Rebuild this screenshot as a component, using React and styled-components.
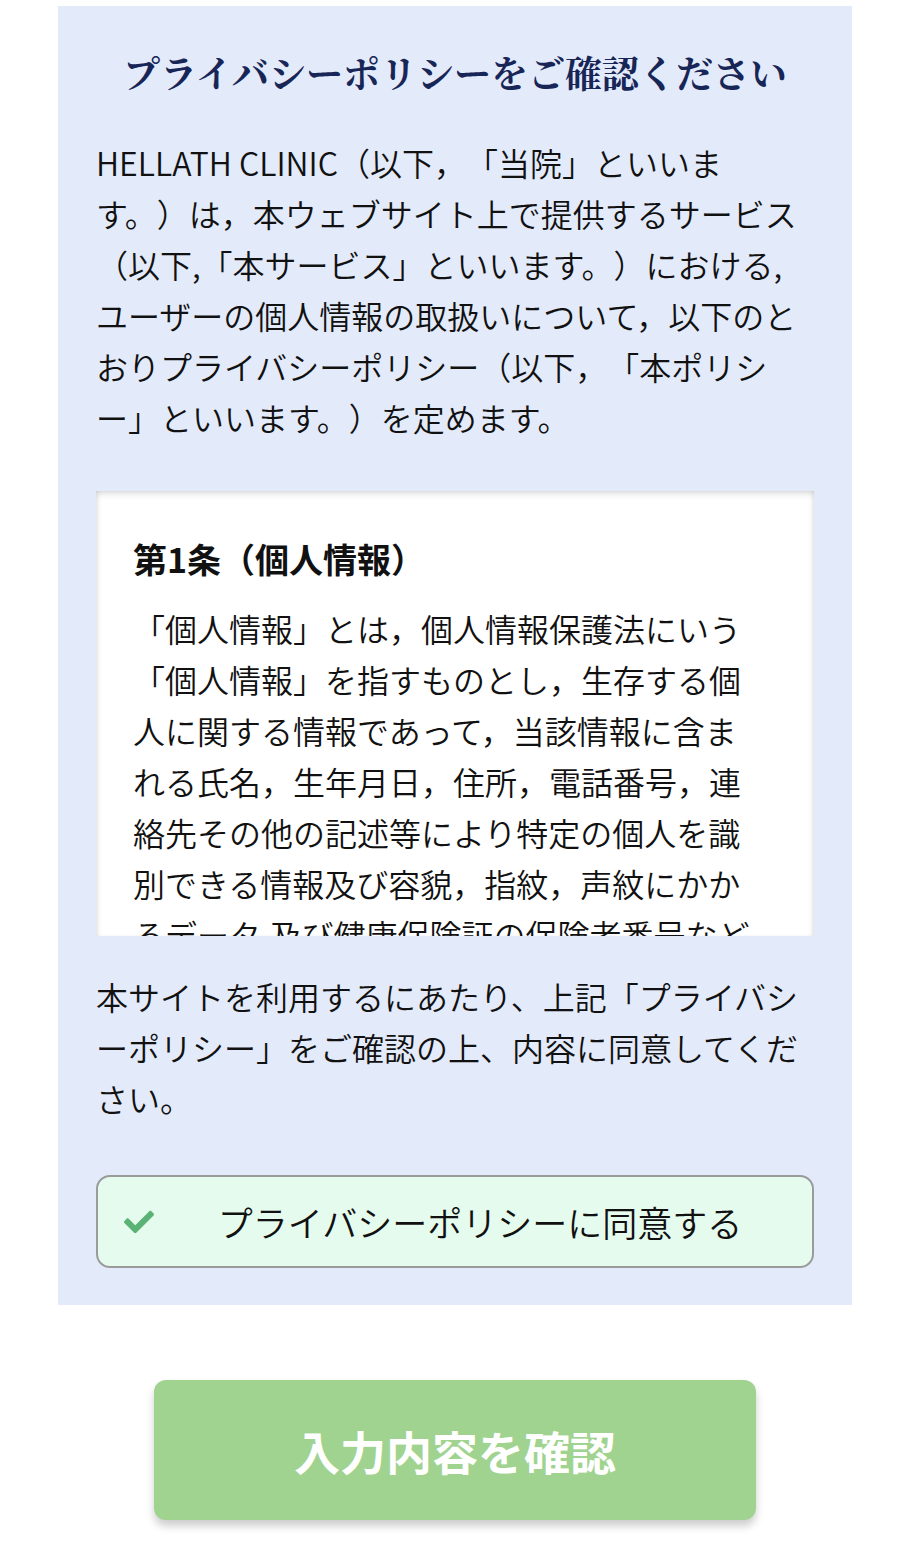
import React from "react";
import styled, { createGlobalStyle } from "styled-components";
import { FaCheck } from "react-icons/fa";

const GlobalStyle = createGlobalStyle`
  html, body {
    margin: 0;
    padding: 0;
    background: #ffffff;
  }
  body {
    font-family: "Noto Sans CJK JP", "Noto Sans", sans-serif;
    color: #111111;
    text-spacing-trim: space-all;
    -webkit-font-smoothing: antialiased;
  }
  * { box-sizing: border-box; }
`;

const Page = styled.div`
  padding: 6px 54px 40px 58px;
`;

const Panel = styled.section`
  background: #e3eafa;
  padding: 39px 38px 37px;
`;

const Title = styled.h1`
  margin: 0 0 38px;
  font-family: "Noto Serif CJK JP", "Noto Sans CJK JP", serif;
  font-size: 37px;
  line-height: 54px;
  font-weight: 700;
  color: #172656;
  text-align: center;
`;

const Text = styled.p`
  margin: ${(p) => p.$margin || "0"};
  font-size: 32px;
  line-height: 51px;
  font-weight: 350;
  color: #111111;
`;

const PolicyBox = styled.div`
  margin-top: 48px;
  height: 445px;
  background: #ffffff;
  padding: 41px 61px 0 37px;
  overflow: hidden;
  box-shadow: inset 0 4px 7px -2px rgba(0, 0, 0, 0.16),
    inset 4px 0 6px -4px rgba(0, 0, 0, 0.12),
    inset -4px 0 6px -4px rgba(0, 0, 0, 0.12);
`;

const ArticleTitle = styled.h2`
  margin: 0 0 17px;
  font-size: 34px;
  line-height: 54px;
  font-weight: 700;
  color: #111111;
`;

const AgreeButton = styled.button`
  margin-top: 51px;
  width: 100%;
  height: 93px;
  display: flex;
  align-items: center;
  padding: 0 0 0 26px;
  border: 2px solid #9b9b9b;
  border-radius: 14px;
  background: #e5fbee;
  font-family: inherit;
  cursor: pointer;
`;

const CheckIcon = styled(FaCheck)`
  width: 30px;
  height: 30px;
  color: #5ab275;
  flex: none;
`;

const AgreeLabel = styled.span`
  flex: 1;
  text-align: center;
  font-size: 35px;
  line-height: 51px;
  font-weight: 350;
  color: #111111;
  padding-right: 6px;
`;

const SubmitWrap = styled.div`
  display: flex;
  justify-content: center;
  padding-top: 75px;
`;

const SubmitButton = styled.button`
  width: 602px;
  height: 140px;
  border: none;
  border-radius: 12px;
  background: #a0d38f;
  color: #ffffff;
  font-family: inherit;
  font-size: 46px;
  font-weight: 700;
  box-shadow: 0 6px 9px rgba(0, 0, 0, 0.2);
  cursor: pointer;
`;

export default function App() {
  return (
    <>
      <GlobalStyle />
      <Page>
        <Panel>
          <Title>プライバシーポリシーをご確認ください</Title>
          <Text>
            HELLATH CLINIC（以下，「当院」といいます。）は，本ウェブサイト上で提供するサービス（以下,「本サービス」といいます。）における,ユーザーの個人情報の取扱いについて，以下のとおりプライバシーポリシー（以下，「本ポリシー」といいます。）を定めます。
          </Text>
          <PolicyBox>
            <ArticleTitle>第1条（個人情報）</ArticleTitle>
            <Text>
              「個人情報」とは，個人情報保護法にいう「個人情報」を指すものとし，生存する個人に関する情報であって，当該情報に含まれる氏名，生年月日，住所，電話番号，連絡先その他の記述等により特定の個人を識別できる情報及び容貌，指紋，声紋にかかるデータ,及び健康保険証の保険者番号などの当該情報単体から特定の個人を識別できる情報（個人識別情報）を指します。
            </Text>
          </PolicyBox>
          <Text $margin="35px 0 0">
            本サイトを利用するにあたり、上記「プライバシーポリシー」をご確認の上、内容に同意してください。
          </Text>
          <AgreeButton type="button">
            <CheckIcon />
            <AgreeLabel>プライバシーポリシーに同意する</AgreeLabel>
          </AgreeButton>
        </Panel>
        <SubmitWrap>
          <SubmitButton type="button">入力内容を確認</SubmitButton>
        </SubmitWrap>
      </Page>
    </>
  );
}
